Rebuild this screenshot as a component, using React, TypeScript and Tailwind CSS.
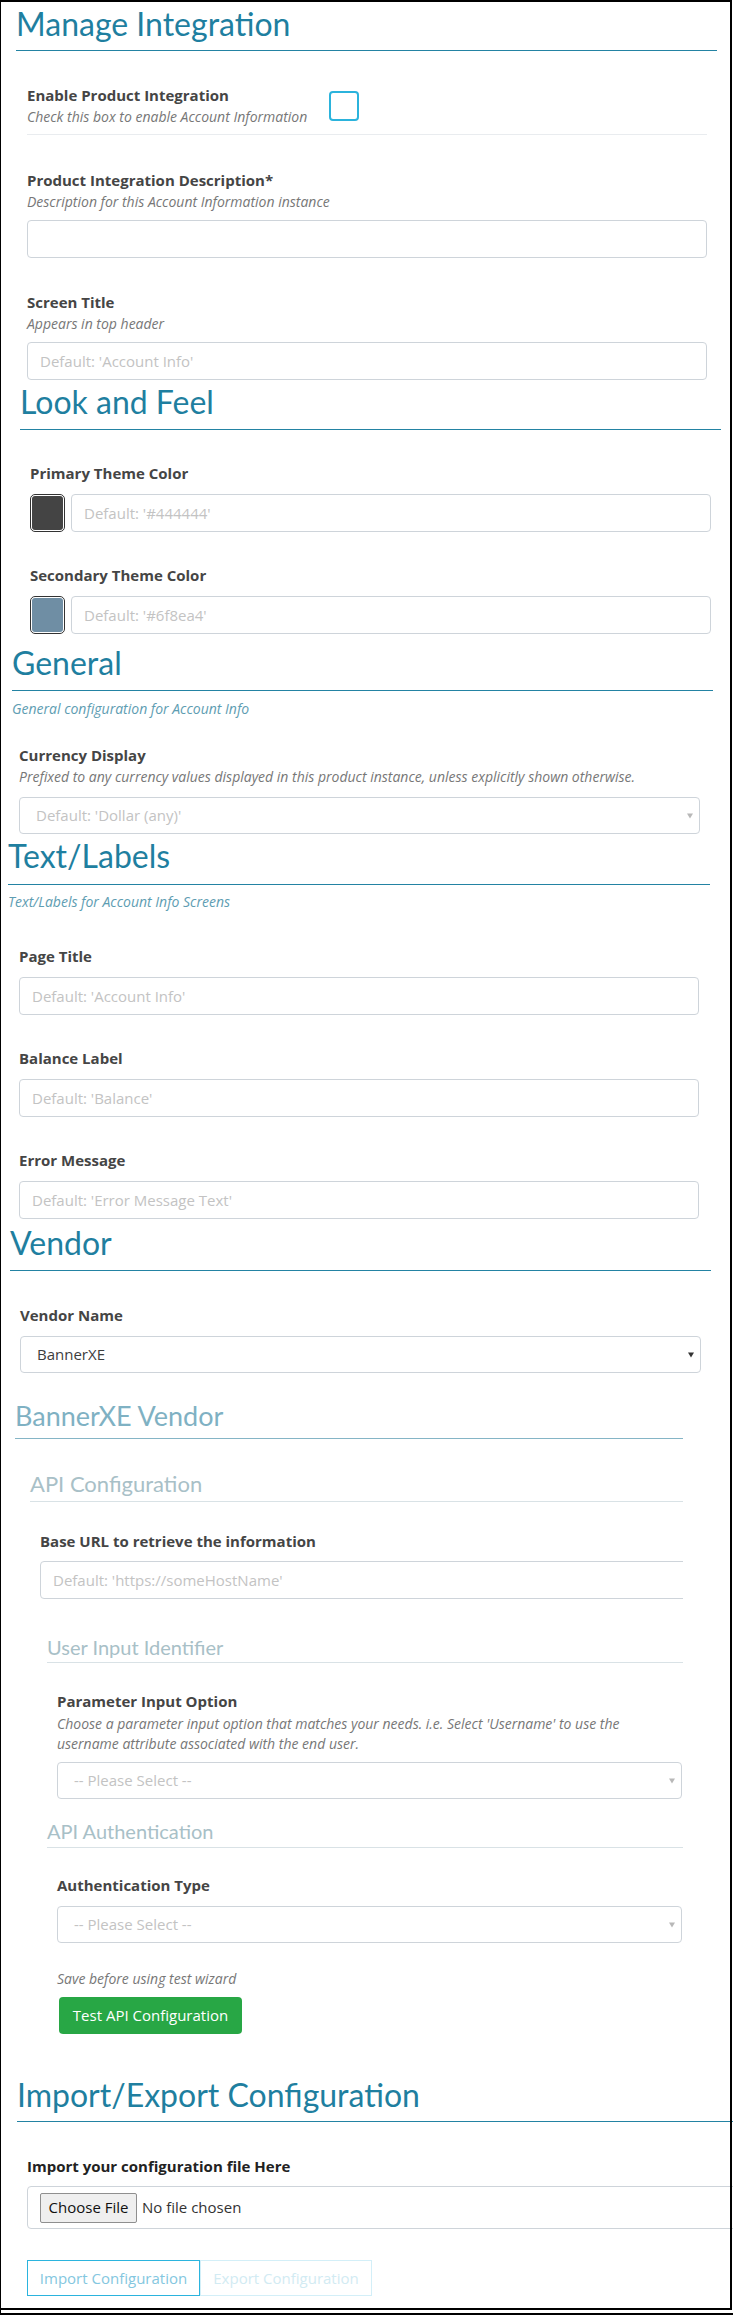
import type { ReactNode } from 'react';

type Props = { children?: ReactNode; className?: string };

// Section title with the teal rule under it
const Heading = ({ children, className = '' }: Props) => (
  <h2
    className={`font-['Lato',sans-serif] text-[32px] leading-[38px] font-normal text-[#1f7fa0] border-b border-[#2383a3] ${className}`}
  >
    {children}
  </h2>
);

const Label = ({ children, className = '' }: Props) => (
  <label className={`block text-[15px] leading-[20px] font-bold text-[#454545] ${className}`}>{children}</label>
);

const Help = ({ children, className = '' }: Props) => (
  <p className={`text-[14px] leading-[20px] italic text-[#777777] ${className}`}>{children}</p>
);

const Note = ({ children, className = '' }: Props) => (
  <p className={`text-[14px] leading-[20px] italic text-[#5e9db2] ${className}`}>{children}</p>
);

const TextInput = ({ placeholder = '', className = '' }: { placeholder?: string; className?: string }) => (
  <input
    readOnly
    placeholder={placeholder}
    className={`block h-[38px] rounded-[4px] border border-[#ced4da] bg-white px-[12px] text-[15px] text-[#495057] placeholder:text-[#c3c3c3] outline-none ${className}`}
  />
);

const SelectBox = ({ text, muted = true, className = '' }: { text: string; muted?: boolean; className?: string }) => (
  <div className={`relative h-[37px] ${className}`}>
    <div
      className={`flex h-full items-center rounded-[4px] border border-[#ced4da] bg-white pl-[16px] text-[15px] ${
        muted ? 'text-[#c3c3c3]' : 'text-[#3d3d3d]'
      }`}
    >
      {text}
    </div>
    <svg className="absolute right-[7px] top-[16px]" width="6" height="6" viewBox="0 0 6 6">
      <path d="M0 0.5h6L3 5.5z" fill={muted ? '#b8b8b8' : '#333333'} />
    </svg>
  </div>
);

const Swatch = ({ color }: { color: string }) => (
  <div className="h-[38px] w-[35px] shrink-0 rounded-[5px] border border-[#333333] bg-white p-px">
    <div className={`h-full w-full rounded-[3px] ${color}`} />
  </div>
);

const SubTitle = ({ children, className = '' }: Props) => (
  <h5
    className={`font-['Lato',sans-serif] border-b border-[#d9e2e6] text-[20px] leading-[26px] font-normal text-[#a8c0c7] ${className}`}
  >
    {children}
  </h5>
);

export default function App() {
  return (
    <div className="relative h-[2315px] w-[733px] overflow-hidden bg-white font-['Open_Sans',sans-serif]">
      <div className="w-[730px] pl-[1px] pt-[2px]">
        {/* Manage Integration */}
        <section className="ml-[15px] mr-[13px] pt-[3px]">
          <Heading className="pb-[7px]">Manage Integration</Heading>
          <div className="ml-[11px] mr-[10px]">
            <div className="mt-[34px] flex items-center border-b border-[#e9ecef] pb-[7px]">
              <div className="w-[302px] shrink-0">
                <Label>Enable Product Integration</Label>
                <Help className="mt-[2px]">Check this box to enable Account Information</Help>
              </div>
              <span className="block h-[30px] w-[30px] rounded-[4px] border-2 border-[#2bb3dc]" />
            </div>
            <div className="mt-[35px]">
              <Label>Product Integration Description*</Label>
              <Help className="mt-[2px]">Description for this Account Information instance</Help>
              <TextInput className="mt-[8px] w-full" />
            </div>
            <div className="mt-[34px]">
              <Label>Screen Title</Label>
              <Help className="mt-[2px]">Appears in top header</Help>
              <TextInput className="mt-[8px] w-full" placeholder="Default: 'Account Info'" />
            </div>
          </div>
        </section>

        {/* Look and Feel */}
        <section className="ml-[19px] mr-[9px] pt-[3px]">
          <Heading className="pb-[8px]">Look and Feel</Heading>
          <div className="ml-[10px] mr-[10px]">
            <div className="mt-[33px]">
              <Label>Primary Theme Color</Label>
              <div className="mt-[11px] flex gap-[6px]">
                <Swatch color="bg-[#444444]" />
                <TextInput className="min-w-0 flex-1" placeholder="Default: '#444444'" />
              </div>
            </div>
            <div className="mt-[33px]">
              <Label>Secondary Theme Color</Label>
              <div className="mt-[11px] flex gap-[6px]">
                <Swatch color="bg-[#6f8ea4]" />
                <TextInput className="min-w-0 flex-1" placeholder="Default: '#6f8ea4'" />
              </div>
            </div>
          </div>
        </section>

        {/* General */}
        <section className="ml-[11px] mr-[17px] pt-[10px]">
          <Heading className="pb-[8px]">General</Heading>
          <Note className="mt-[8px]">General configuration for Account Info</Note>
          <div className="ml-[7px] mr-[13px] mt-[26px]">
            <Label>Currency Display</Label>
            <Help className="mt-[2px]">
              Prefixed to any currency values displayed in this product instance, unless explicitly shown otherwise.
            </Help>
            <SelectBox className="mt-[10px]" text="Default: 'Dollar (any)'" />
          </div>
        </section>

        {/* Text/Labels */}
        <section className="ml-[7px] mr-[20px] pt-[3px]">
          <Heading className="pb-[9px]">Text/Labels</Heading>
          <Note className="mt-[7px]">Text/Labels for Account Info Screens</Note>
          <div className="ml-[11px] mr-[11px]">
            <div className="mt-[34px]">
              <Label>Page Title</Label>
              <TextInput className="mt-[11px] w-full" placeholder="Default: 'Account Info'" />
            </div>
            <div className="mt-[33px]">
              <Label>Balance Label</Label>
              <TextInput className="mt-[11px] w-full" placeholder="Default: 'Balance'" />
            </div>
            <div className="mt-[33px]">
              <Label>Error Message</Label>
              <TextInput className="mt-[11px] w-full" placeholder="Default: 'Error Message Text'" />
            </div>
          </div>
        </section>

        {/* Vendor */}
        <section className="ml-[9px] mr-[19px] pt-[5px]">
          <Heading className="pb-[8px]">Vendor</Heading>
          <div className="ml-[10px] mr-[10px] mt-[34px]">
            <Label>Vendor Name</Label>
            <SelectBox className="mt-[11px]" text="BannerXE" muted={false} />
          </div>

          <div className="ml-[5px] mr-[28px] mt-[26px] overflow-hidden">
            <h3 className="font-['Lato',sans-serif] border-b border-[#85b5c6] pb-[5px] text-[27px] leading-[34px] font-normal text-[#7fb1c3]">
              BannerXE Vendor
            </h3>

            <div className="ml-[15px] mt-[31px]">
              <h4 className="font-['Lato',sans-serif] border-b border-[#d9e2e6] pb-[3px] text-[22px] leading-[28px] font-normal text-[#a8c0c7]">
                API Configuration
              </h4>
              <div className="ml-[10px] -mr-[30px] mt-[29px]">
                <Label>Base URL to retrieve the information</Label>
                <TextInput className="mt-[10px] w-full" placeholder="Default: 'https://someHostName'" />
              </div>

              <div className="ml-[17px] mt-[35px]">
                <SubTitle className="pb-[2px]">User Input Identifier</SubTitle>
                <div className="ml-[10px] mr-[1px] mt-[28px]">
                  <Label>Parameter Input Option</Label>
                  <Help className="mt-[3px] max-w-[615px]">
                    Choose a parameter input option that matches your needs. i.e. Select 'Username' to use the username
                    attribute associated with the end user.
                  </Help>
                  <SelectBox className="mt-[8px]" text="-- Please Select --" />
                </div>
              </div>

              <div className="ml-[17px] mt-[19px]">
                <SubTitle className="pb-[3px]">API Authentication</SubTitle>
                <div className="ml-[10px] mr-[1px] mt-[27px]">
                  <Label>Authentication Type</Label>
                  <SelectBox className="mt-[11px]" text="-- Please Select --" />
                  <Help className="mt-[26px]">Save before using test wizard</Help>
                  <button className="ml-[2px] mt-[8px] h-[37px] w-[183px] rounded-[4px] bg-[#28a745] text-[15px] text-white">
                    Test API Configuration
                  </button>
                </div>
              </div>
            </div>
          </div>
        </section>

        {/* Import/Export Configuration */}
        <section className="ml-[16px] -mr-[20px] pt-[42px]">
          <Heading className="pb-[7px]">Import/Export Configuration</Heading>
          <div className="ml-[10px] mt-[34px]">
            <label className="block text-[15px] leading-[20px] font-bold text-[#222222]">
              Import your configuration file Here
            </label>
            <div className="mt-[10px] flex h-[43px] items-center rounded-[4px] border border-[#ced4da] pl-[12px]">
              <span className="flex h-[30px] w-[97px] items-center justify-center rounded-[2px] border border-[#8f8f8f] bg-[#efefef] text-[15px] text-[#111111]">
                Choose File
              </span>
              <span className="ml-[5px] text-[15px] text-[#333333]">No file chosen</span>
            </div>
            <div className="mt-[31px] flex">
              <button className="h-[36px] w-[173px] border border-[#2bb4de] text-[15px] text-[#84c7e0]">
                Import Configuration
              </button>
              <button className="h-[36px] w-[172px] border border-[#d3eff8] text-[15px] text-[#d2ebf3]">
                Export Configuration
              </button>
            </div>
          </div>
        </section>
      </div>

      {/* window frame */}
      <div className="pointer-events-none absolute left-0 top-0 h-[2310px] w-[732px] border-b-2 border-l border-r-2 border-t-2 border-black" />
      <div className="absolute left-0 top-[2310px] h-[5px] w-px bg-black" />
      <div className="absolute left-0 top-[2313px] h-[2px] w-[733px] bg-black" />
    </div>
  );
}
